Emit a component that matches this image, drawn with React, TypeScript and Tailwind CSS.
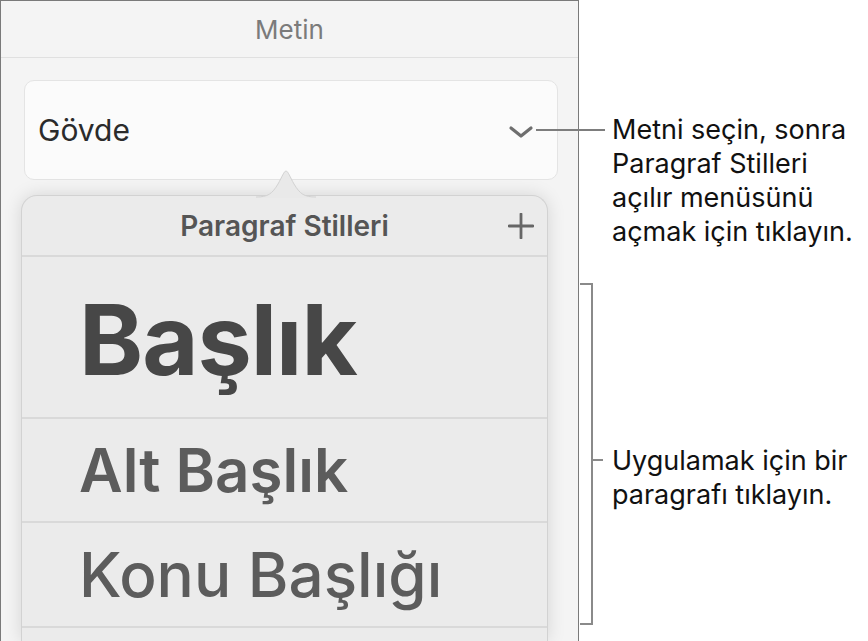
function Chevron() {
  return (
    <svg width="26" height="16" viewBox="0 0 26 16" className="shrink-0 mt-[3px]">
      <polyline points="3,4 13,12 23,4" fill="none" stroke="#6e6e6e" strokeWidth="3.2" strokeLinecap="round" strokeLinejoin="round" />
    </svg>
  );
}

function PlusIcon() {
  return (
    <svg width="26" height="26" viewBox="0 0 26 26" className="absolute right-[13px] top-[17px]">
      <path d="M13 1 V25 M1 13 H25" stroke="#666" strokeWidth="2.8" strokeLinecap="round" />
    </svg>
  );
}

function PopoverArrow() {
  return (
    <svg width="60" height="28" viewBox="0 0 60 28" className="absolute -top-[26px] left-[234px]">
      <path d="M0,27 C12,27 16,24 22,14 C26,7 28,1 30,1 C32,1 34,7 38,14 C44,24 48,27 60,27 L60,28 L0,28 Z" fill="#e9e9e9" />
      <path d="M0,27 C12,27 16,24 22,14 C26,7 28,1 30,1 C32,1 34,7 38,14 C44,24 48,27 60,27" fill="none" stroke="#d2d2d2" strokeWidth="1" />
    </svg>
  );
}

const rows = [
  { label: 'Başlık', cls: 'h-[162px] text-[97px] font-bold text-[#474747] tracking-[-1px] pt-[4px]' },
  { label: 'Alt Başlık', cls: 'h-[104px] text-[60px] font-semibold text-[#5c5c5c]' },
  { label: 'Konu Başlığı', cls: 'h-[105px] text-[62px] font-medium text-[#5c5c5c]' },
];

export default function App() {
  return (
    <div className="relative w-[868px] h-[641px] bg-white flex overflow-hidden font-['Inter',sans-serif]">
      <div className="w-[579px] h-full shrink-0 flex flex-col border-l border-t border-r border-[#7a7a7a] bg-[#f4f4f4]">
        <div className="h-[57px] shrink-0 flex items-center justify-center border-b border-[#e0e0e0] text-[26px] text-[#7b7b7b]">
          Metin
        </div>
        <div className="mt-[22px] ml-[23px] w-[534px] h-[100px] shrink-0 flex items-center justify-between rounded-[10px] border border-[#e4e4e4] bg-[#fbfbfb] pl-[13px] pr-[23px]">
          <span className="text-[30px] text-[#2b2b2b]">Gövde</span>
          <Chevron />
        </div>
        <div className="relative mt-[15px] ml-[20px] w-[527px] flex-1 rounded-t-[16px] border-x border-t border-[#d2d2d2] bg-[#ebebeb] shadow-[0_0_18px_rgba(0,0,0,0.13)]">
          <PopoverArrow />
          <div className="relative h-[61px] flex items-center justify-center border-b-2 border-[#d9d9d9]">
            <span className="text-[28px] font-semibold text-[#555]">Paragraf Stilleri</span>
            <PlusIcon />
          </div>
          {rows.map((r) => (
            <div key={r.label} className={`flex items-center px-[57px] border-b-2 border-[#d9d9d9] leading-none ${r.cls}`}>
              {r.label}
            </div>
          ))}
        </div>
      </div>

      <div className="flex-1 flex flex-col text-[27px] leading-[34px] text-[#111]">
        <div className="mt-[113px] pl-[33px]">
          <div>Metni seçin, sonra</div>
          <div>Paragraf Stilleri</div>
          <div>açılır menüsünü</div>
          <div>açmak için tıklayın.</div>
        </div>
        <div className="mt-[34px] flex">
          <div className="ml-[1px] w-[13px] h-[342px] shrink-0 border-y-2 border-r-2 border-[#8a8a8a]" />
          <div className="mt-[176px] w-[10px] h-[2px] shrink-0 bg-[#8a8a8a]" />
          <div className="mt-[161px] ml-[9px] whitespace-nowrap">
            <div>Uygulamak için bir</div>
            <div>paragrafı tıklayın.</div>
          </div>
        </div>
      </div>

      <div className="absolute left-[536px] top-[129px] w-[69px] h-[2px] bg-[#7d7d7d]" />
    </div>
  );
}
